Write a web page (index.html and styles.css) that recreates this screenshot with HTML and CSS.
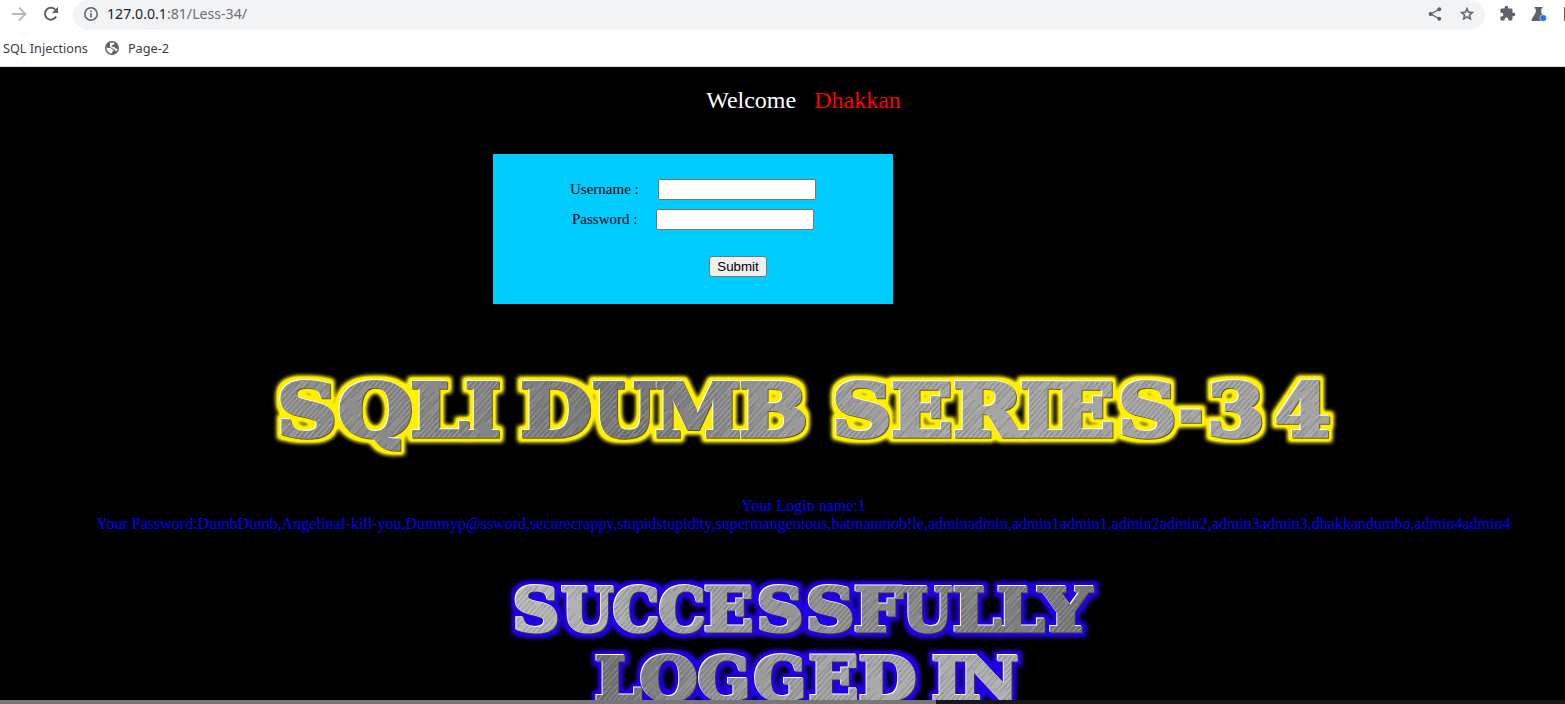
FILE: index.html
```html
<!DOCTYPE html>
<html lang="en">
<head>
<meta charset="utf-8">
<title>Less-34</title>
<link rel="stylesheet" href="styles.css">
</head>
<body>
<header class="browser">
  <div class="toolbar">
    <svg class="nav" width="16" height="16" viewBox="0 0 16 16"><path d="M1 8h13M8 1.5 14.5 8 8 14.5" fill="none" stroke="#b6b8bb" stroke-width="1.8"/></svg>
    <svg class="nav" width="16" height="16" viewBox="0 0 16 16"><path d="M13.2 10.6A6 6 0 1 1 12.7 4" fill="none" stroke="#5f6368" stroke-width="2"/><path d="M15 .8v6.1H8.9z" fill="#5f6368"/></svg>
    <div class="omnibox">
      <svg width="14" height="14" viewBox="0 0 14 14"><circle cx="7" cy="7" r="6.2" fill="none" stroke="#5f6368" stroke-width="1.5"/><path d="M6.2 6.2h1.6v4.3H6.2zM6.2 3.4h1.6V5H6.2z" fill="#5f6368"/></svg>
      <span class="url"><b>127.0.0.1</b>:81/Less-34/</span>
      <svg class="share" width="14" height="14" viewBox="0 0 14 14"><path d="M11.3 2.2 2.6 7l8.7 4.8" fill="none" stroke="#5f6368" stroke-width="1.3"/><g fill="#5f6368"><circle cx="11.2" cy="2.3" r="2"/><circle cx="2.6" cy="7" r="2"/><circle cx="11.2" cy="11.7" r="2"/></g></svg>
      <svg width="16" height="16" viewBox="0 0 24 24"><path d="M22 9.24l-7.19-.62L12 2 9.19 8.63 2 9.24l5.46 4.73L5.82 21 12 17.27 18.18 21l-1.63-7.03L22 9.24zM12 15.4l-3.76 2.27 1-4.28-3.32-2.88 4.38-.38L12 6.1l1.71 4.04 4.38.38-3.32 2.88 1 4.28L12 15.4z" fill="#5f6368" stroke="#5f6368" stroke-width=".8"/></svg>
    </div>
    <svg class="puzzle" width="17" height="17" viewBox="0 0 24 24"><path d="M20.5 11H19V7c0-1.1-.9-2-2-2h-4V3.500a2.500 2.500 0 0 0-5 0V5H4c-1.100 0-2 .9-2 2v3.800h1.500a2.700 2.700 0 0 1 0 5.400H2V20c0 1.100.9 2 2 2h3.800v-1.500a2.700 2.700 0 0 1 5.400 0V22H17c1.100 0 2-.9 2-2v-4h1.500a2.500 2.500 0 0 0 0-5z" fill="#5f6368"/></svg>
    <svg class="flask" width="16" height="16" viewBox="0 0 16 16"><path d="M3.500 1h8v1.500h-1.200V6.500L14 13.500V15H.5v-1.500l4.200-7v-4H3.500z" fill="#5f6368"/><circle cx="12.200" cy="12" r="3.300" fill="#1a73e8" stroke="#fff" stroke-width=".5"/></svg>
    <i class="cut"></i>
  </div>
  <nav class="bookmarks">
    <span>SQL Injections</span>
    <svg width="14" height="14" viewBox="0 0 14 14"><circle cx="7" cy="7" r="7" fill="#5f6368"/><path d="M1.500 6.800 5.800 7l1.500 1.600H9L7.600 10.500 6.500 12.600A5.600 5.600 0 0 1 1.500 6.800zM5 1.800h4.500L9 3.500 7 4.200 6.500 5.800 9.500 6l1 1.500 2 .2A5 5 0 0 1 11 10.800L9.800 8.500 7.500 7.300 5 6z" fill="#fff"/></svg>
    <span>Page-2</span>
  </nav>
</header>
<div class="viewport">
<main class="page">
  <h1 class="welcome">Welcome <span>Dhakkan</span></h1>
  <form class="login">
    <label class="row">Username : <input class="user" type="text"></label>
    <label class="row pass">Password : <input type="password"></label>
    <button type="button">Submit</button>
  </form>
  <svg class="title" width="1607" height="120" viewBox="0 350 1607 120">
    <defs>
      <linearGradient id="steel" gradientUnits="userSpaceOnUse" x1="270" y1="350" x2="1340" y2="470">
        <stop offset="0" stop-color="#929292"/><stop offset=".2" stop-color="#858585"/><stop offset=".34" stop-color="#777"/><stop offset=".48" stop-color="#999"/><stop offset=".65" stop-color="#a5a5a5"/><stop offset="1" stop-color="#a4a4a4"/>
      </linearGradient>
      <linearGradient id="chrome" gradientUnits="userSpaceOnUse" x1="510" y1="610" x2="1100" y2="640">
        <stop offset="0" stop-color="#bbb"/><stop offset=".4" stop-color="#999"/><stop offset=".65" stop-color="#898989"/><stop offset="1" stop-color="#777"/>
      </linearGradient>
      <linearGradient id="chrome2" gradientUnits="userSpaceOnUse" x1="595" y1="650" x2="1020" y2="700">
        <stop offset="0" stop-color="#707070"/><stop offset=".35" stop-color="#999"/><stop offset=".7" stop-color="#aaa"/><stop offset="1" stop-color="#b0b0b0"/>
      </linearGradient>
      <pattern id="brush" width="23" height="71" patternUnits="userSpaceOnUse" patternTransform="rotate(42)">
        <path d="M1 0v60M4.500 20v38M8 12v48M12 0v50M15.500 30v41M20 0v44" stroke="#fff" stroke-opacity=".2" stroke-width=".7"/>
        <path d="M2.700 0v40M6 10v50M10 0v60M14 10v44M18 0v71M22 20v40" stroke="#000" stroke-opacity=".2" stroke-width=".7"/>
      </pattern>
      <filter id="yellow" filterUnits="userSpaceOnUse" x="250" y="350" width="1110" height="120" color-interpolation-filters="sRGB">
        <feMorphology in="SourceAlpha" operator="dilate" radius="4"/>
        <feGaussianBlur stdDeviation="2.200"/>
        <feComponentTransfer result="soft"><feFuncA type="linear" slope="1.500"/></feComponentTransfer>
        <feFlood flood-color="#fff000"/><feComposite in2="soft" operator="in" result="glow"/>
        <feOffset in="SourceAlpha" dx="-.6" dy="-.6" result="up"/>
        <feFlood flood-color="#fff"/><feComposite in2="up" operator="in" result="light"/>
        <feOffset in="SourceAlpha" dx=".6" dy=".6" result="down"/>
        <feFlood flood-color="#665f20"/><feComposite in2="down" operator="in" result="dark"/>
        <feMerge><feMergeNode in="glow"/><feMergeNode in="dark"/><feMergeNode in="light"/><feMergeNode in="SourceGraphic"/></feMerge>
      </filter>
      <filter id="blue" filterUnits="userSpaceOnUse" x="490" y="565" width="630" height="140" color-interpolation-filters="sRGB">
        <feMorphology in="SourceAlpha" operator="dilate" radius="4"/>
        <feGaussianBlur stdDeviation="2.200"/>
        <feComponentTransfer result="soft"><feFuncA type="linear" slope="1.300"/></feComponentTransfer>
        <feFlood flood-color="#2000e8"/><feComposite in2="soft" operator="in" result="glow"/>
        <feOffset in="SourceAlpha" dx="-.6" dy="-.6" result="up"/>
        <feFlood flood-color="#fff"/><feComposite in2="up" operator="in" result="light"/>
        <feOffset in="SourceAlpha" dx=".8" dy=".8" result="down"/>
        <feFlood flood-color="#333050"/><feComposite in2="down" operator="in" result="dark"/>
        <feMerge><feMergeNode in="glow"/><feMergeNode in="dark"/><feMergeNode in="light"/><feMergeNode in="SourceGraphic"/></feMerge>
      </filter>
    </defs>
    <g id="headline" filter="url(#yellow)"></g>
  </svg>
  <p class="result">Your Login name:1<br>Your Password:DumbDumb,AngelinaI-kill-you,Dummyp@ssword,securecrappy,stupidstupidity,supermangenious,batmanmob!le,adminadmin,admin1admin1,admin2admin2,admin3admin3,dhakkandumbo,admin4admin4</p>
  <svg class="success" width="1607" height="135" viewBox="0 565 1607 135"><g id="status" filter="url(#blue)"></g></svg>
</main>
</div>
<div class="scrollbar"><i></i></div>
<script src="banner.js"></script>
</body>
</html>
```
FILE: styles.css
```css
body { margin: 0; height: 704px; display: flex; flex-direction: column; overflow: hidden; background: #000; font-family: "Liberation Serif", serif; }
svg { display: block; flex: none; }
.browser { height: 66px; border-bottom: 1px solid #dadce0; background: #fff; font-family: "Noto Sans", sans-serif; flex: none; }
.toolbar { height: 30px; display: flex; align-items: flex-start; padding-left: 11px; }
.nav { margin: 6px 16px 0 0; }
.omnibox { width: 1391px; height: 28px; margin-left: -2px; padding: 0 10px 2px 11px; display: flex; align-items: center; background: #f1f3f4; border-radius: 15px; flex: none; }
.url { margin-left: 9px; font-size: 14.15px; line-height: 28px; color: #6b6f74; }
.url b { font-weight: 400; color: #202124; }
.share { margin: 0 17px 0 auto; }
.puzzle { margin: 5px 0 0 14px; }
.flask { margin: 6px 0 0 15px; }
.cut { width: 3px; height: 14px; margin: 7px 0 0 17px; background: #5f6368; flex: none; }
.bookmarks { display: flex; align-items: center; height: 36px; padding-left: 3px; font-size: 12.7px; color: #3c4043; }
.bookmarks svg { margin: 0 9px 0 17px; }
.viewport { flex: 1; min-height: 0; overflow: hidden; background: #000; }
.page { width: 1607px; }
.welcome { margin: 0; padding-top: 19px; height: 68px; font-size: 24px; font-weight: 400; line-height: 28px; text-align: center; color: #fff; }
.welcome span { margin-left: 12px; color: #f00; }
.login { width: 400px; height: 150px; margin-left: 493px; box-sizing: border-box; padding-top: 25px; background: #0cf; display: flex; flex-direction: column; font-size: 15px; }
.row { display: flex; align-items: center; height: 21px; padding-left: 77px; }
.pass { margin-top: 9px; padding-left: 79px; }
.row input { width: 158px; height: 21px; box-sizing: border-box; margin: 0 0 0 19px; padding: 1px 2px; border: 1px solid #767676; border-radius: 2px; background: #fff; }
.login button { width: 58px; height: 21px; margin: 26px 0 0 216px; padding: 0; border: 1px solid #767676; border-radius: 3px; background: #efefef; font: 13.333px "Liberation Sans", sans-serif; color: #000; }
.title { margin-top: 46px; }
.result { margin: 27px 0 0; font-size: 16px; line-height: 18px; text-align: center; color: #00f; white-space: nowrap; }
.success { margin-top: 32px; }
.letters { font-family: "DejaVu Serif", serif; font-weight: 700; stroke-linejoin: miter; }
.large { font-size: 72px; stroke-width: 3.5px; }
.small { font-size: 60px; stroke-width: 3px; }
.scrollbar { height: 4px; flex: none; background: #17181b; }
.scrollbar i { display: block; width: 936px; height: 4px; background: #777; }
```
FILE: banner.js
```js
// Each letter is given as [character, left edge, right edge].
const NS = 'http://www.w3.org/2000/svg';

function drawLine(group, letters, baseline, sizeClass, gradient) {
  for (const fill of [gradient, 'brush']) {
    const layer = document.createElementNS(NS, 'g');
    layer.setAttribute('class', 'letters ' + sizeClass);
    layer.setAttribute('fill', `url(#${fill})`);
    layer.setAttribute('stroke', `url(#${fill})`);
    if (fill === 'brush') layer.setAttribute('aria-hidden', 'true');
    const text = document.createElementNS(NS, 'text');
    text.setAttribute('y', baseline);
    for (const [ch, left, right] of letters) {
      const pad = ch === 'U' ? 0 : ch === 'Y' ? -1 : 1.3;
      const span = document.createElementNS(NS, 'tspan');
      span.setAttribute('x', left - pad - 0.6);
      span.setAttribute('textLength', right - left + pad * 2);
      span.setAttribute('lengthAdjust', 'spacingAndGlyphs');
      span.textContent = ch;
      text.appendChild(span);
    }
    layer.appendChild(text);
    group.appendChild(layer);
  }
}

drawLine(document.getElementById('headline'), [
  ['S', 279, 336], ['Q', 340, 412], ['L', 412, 468], ['I', 467, 500],
  ['D', 522, 591], ['U', 593, 656], ['M', 657, 740], ['B', 741, 807],
  ['S', 834, 891], ['E', 893, 952], ['R', 955, 1022], ['I', 1022, 1056],
  ['E', 1055, 1114], ['S', 1120, 1176], ['-', 1181, 1202], ['3', 1209, 1264], ['4', 1277, 1330]
], 436, 'large', 'steel');

const status = document.getElementById('status');
drawLine(status, [
  ['S', 515, 559], ['U', 562, 614], ['C', 615, 659], ['C', 661, 705],
  ['E', 706, 753], ['S', 759, 803], ['S', 808, 854], ['F', 856, 902],
  ['U', 903, 953], ['L', 955, 1001], ['L', 999, 1044], ['Y', 1039, 1093]
], 631, 'small', 'chrome');
drawLine(status, [
  ['L', 597, 641], ['O', 642, 697], ['G', 700, 750], ['G', 756, 806],
  ['E', 811, 858], ['D', 861, 916], ['I', 934, 962], ['N', 961, 1018]
], 700, 'small', 'chrome2');
```
